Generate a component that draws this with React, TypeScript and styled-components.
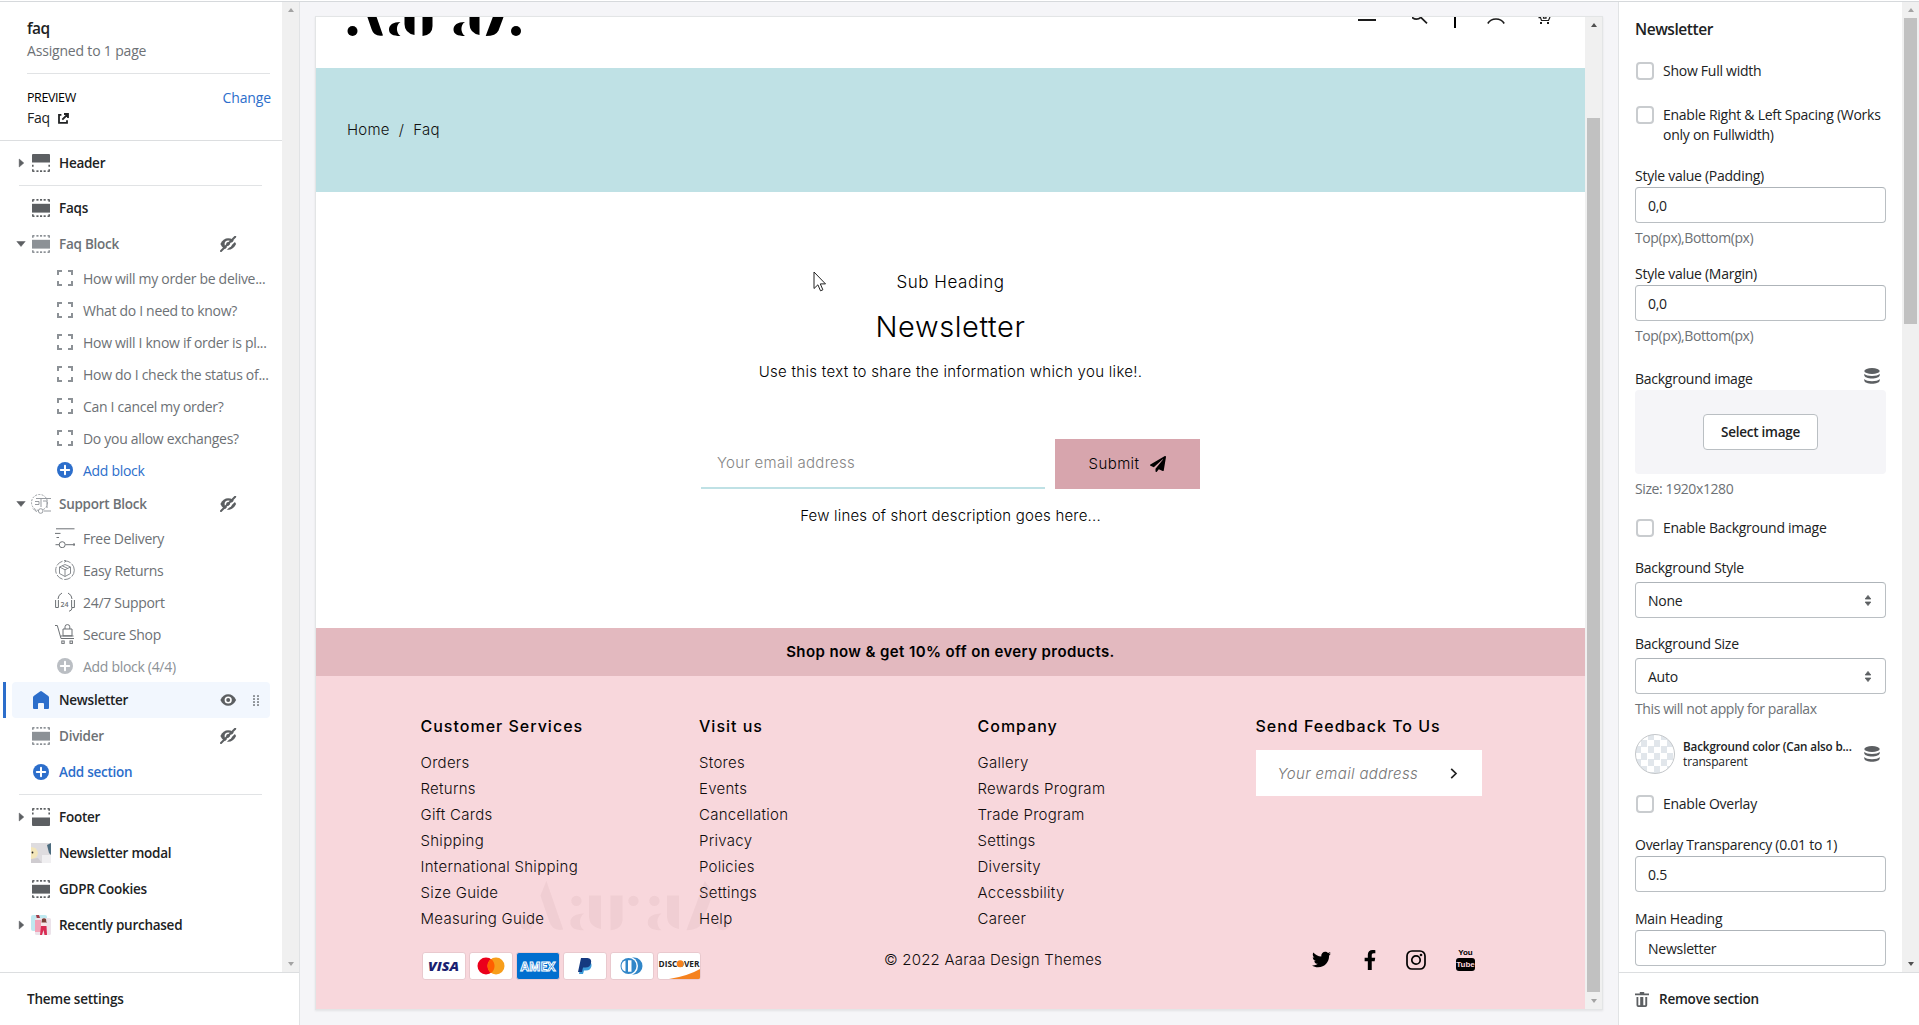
import React from 'react';
import styled, { createGlobalStyle, css } from 'styled-components';
import { FaTwitter, FaFacebookF, FaPaperPlane } from 'react-icons/fa';

const adminFont = '"Open Sans", "Noto Sans", sans-serif';
const storeFont = 'Inter, "Liberation Sans", sans-serif';

const GlobalStyle = createGlobalStyle`
  *, *::before, *::after { box-sizing: border-box; }
  body { margin: 0; background: #f6f6f7; overflow: hidden; font-family: ${adminFont}; color: #202223; }
  svg { display: block; flex: none; }
  ul { list-style: none; margin: 0; padding: 0; }
  h1, h2, h3, p { margin: 0; }
`;

/* ---------- Shell ---------- */

const Editor = styled.div`
  display: flex;
  flex-direction: column;
  width: 1919px;
  height: 1025px;
  overflow: hidden;
`;

const TopEdge = styled.div`
  flex: none;
  height: 2px;
  background: #d6d9dc;
  border-top: 1px solid #fff;
`;

const Columns = styled.div`
  flex: 1;
  min-height: 0;
  display: flex;
`;

const Panel = styled.aside<{ $side: 'left' | 'right' }>`
  flex: none;
  display: flex;
  flex-direction: column;
  width: ${(p) => (p.$side === 'left' ? 300 : 301)}px;
  background: #fff;
  ${(p) => (p.$side === 'left' ? 'border-right' : 'border-left')}: 1px solid #e1e3e5;
  font-size: 14px;
  letter-spacing: -0.26px;
`;

const PanelScroll = styled.div`
  flex: none;
  display: flex;
  height: 970px;
`;

const PanelContent = styled.div`
  flex: 1;
  min-width: 0;
  overflow: hidden;
`;

const PanelFooter = styled.div<{ $pad: number }>`
  flex: 1;
  display: flex;
  align-items: center;
  gap: 10px;
  padding-left: ${(p) => p.$pad}px;
  border-top: 1px solid #dcdee0;
  font-size: 13.5px;
  font-weight: 600;
  letter-spacing: -0.22px;
`;

const Track = styled.div`
  flex: none;
  display: flex;
  flex-direction: column;
  align-items: center;
  justify-content: space-between;
  width: 17px;
  padding: 6px 0;
  background: #f0f0f0;
`;

const Thumb = styled.div<{ $before: number; $height: number }>`
  width: 13px;
  height: ${(p) => p.$height}px;
  margin-top: ${(p) => p.$before}px;
  margin-bottom: auto;
  background: #c1c1c1;
`;

const Arrow = styled.i<{ $down?: boolean; $color?: string }>`
  border: 3.5px solid transparent;
  ${(p) =>
    p.$down
      ? css`border-top: 4px solid ${p.$color || '#a3a3a3'}; border-bottom: 0;`
      : css`border-bottom: 4px solid ${p.$color || '#a3a3a3'}; border-top: 0;`}
`;

/* ---------- Left panel ---------- */

const TemplateHead = styled.header`
  display: flex;
  flex-direction: column;
  height: 72px;
  margin: 0 12px 0 27px;
  padding-top: 16px;
  border-bottom: 1px solid #e1e3e5;
  line-height: 20px;
`;

const TemplateName = styled.h1`
  font-size: 15.5px;
  line-height: 20px;
  font-weight: 600;
  letter-spacing: -0.5px;
`;

const Muted = styled.span`
  color: #6d7175;
  margin-top: 3px;
  letter-spacing: -0.18px;
`;

const PreviewBox = styled.div`
  display: grid;
  grid-template-columns: 1fr auto;
  align-content: start;
  height: 67px;
  padding: 14px 11px 0 27px;
  border-bottom: 1px solid #dcdee0;
  line-height: 20px;
`;

const PreviewLabel = styled.span`
  font-size: 12.5px;
  letter-spacing: -0.4px;
  color: #000;
  font-weight: 500;
`;

const PreviewPage = styled.span`
  display: flex;
  align-items: center;
  gap: 8px;
`;

const TextLink = styled.a`
  color: #2c6ecb;
  letter-spacing: -0.12px;
`;

const Group = styled.ul<{ $top?: number }>`
  margin-left: 12px;
  width: 258px;
  padding-top: ${(p) => p.$top ?? 4}px;
`;

const Rule = styled.hr<{ $top: number }>`
  margin: ${(p) => p.$top}px 20px 0 19px;
  border: 0;
  border-top: 1px solid #e1e3e5;
`;

const Row = styled.li<{ $tone?: 'muted' | 'link'; $selected?: boolean }>`
  position: relative;
  display: flex;
  align-items: center;
  height: 36px;
  padding-left: 3px;
  border-radius: 4px;
  font-size: 13.5px;
  font-weight: 600;
  letter-spacing: -0.26px;
  white-space: nowrap;
  color: ${(p) => (p.$tone === 'muted' ? '#6d7175' : p.$tone === 'link' ? '#2c6ecb' : '#202223')};
  ${(p) =>
    p.$selected &&
    css`
      background: #f2f7fe;
      &::before {
        content: '';
        position: absolute;
        left: -9px;
        top: 0;
        width: 3px;
        height: 36px;
        background: #2c6ecb;
      }
    `}
`;

const CaretSlot = styled.span`
  flex: none;
  display: flex;
  justify-content: center;
  width: 12px;
  margin-right: 4px;
`;

const IconSlot = styled.span`
  flex: none;
  display: flex;
  align-items: center;
  justify-content: center;
  width: 20px;
  height: 20px;
  margin-right: 8px;
`;

const RowLabel = styled.span`
  flex: 1;
`;

const RowTools = styled.span`
  display: flex;
  align-items: center;
  width: 50px;
  gap: 16px;
`;

const BlockRow = styled.li<{ $tone?: 'link' | 'disabled' }>`
  display: flex;
  align-items: center;
  height: 32px;
  padding-left: 43px;
  white-space: nowrap;
  letter-spacing: -0.3px;
  color: ${(p) => (p.$tone === 'link' ? '#2c6ecb' : p.$tone === 'disabled' ? '#8c9196' : '#6d7175')};
`;

/* ---------- Icons ---------- */

const Caret = ({ open }: { open?: boolean }) => (
  <svg width="12" height="12" viewBox="0 0 12 12" fill="#5c5f62">
    {open ? <path d="M1.8 3.5h8.400L6 8.500z" stroke="#5c5f62" strokeWidth=".5" /> : <path d="M4.200 2v8L8.800 6z" stroke="#5c5f62" strokeWidth=".5" />}
  </svg>
);

const dashX = [4.4, 8, 11.6];

const SectionIcon = ({ kind = 'section', muted }: { kind?: 'section' | 'header' | 'footer'; muted?: boolean }) => (
  <svg width="18" height="18" viewBox="0 0 18 18" fill={muted ? '#8c9196' : '#5c5f62'}>
    {kind === 'section' && <rect y="4.8" width="18" height="8.8" />}
    {kind === 'header' && <path d="M1 0h16q1 0 1 1v7.5H0V1q0-1 1-1z" />}
    {kind === 'footer' && <path d="M0 9.5h18V17q0 1-1 1H1q-1 0-1-1z" />}
    {kind !== 'header' && (
      <>
        <path d="M1 0h1.500v1.600H1.600v1.200H0V1q0-1 1-1zM17 0h-1.500v1.600h.9v1.200H18V1q0-1-1-1z" />
        {dashX.map((x) => <rect key={x} x={x} width="2.1" height="1.7" />)}
      </>
    )}
    {kind === 'footer' && <path d="M0 4.600h1.600v2H0zM16.400 4.600H18v2h-1.600z" />}
    {kind === 'header' && <path d="M0 10.800h1.600v2H0zM16.400 10.800H18v2h-1.600z" />}
    {kind !== 'footer' && (
      <>
        <path d="M1 18h1.500v-1.600h-.9v-1.200H0V17q0 1 1 1zM17 18h-1.500v-1.600h.9v-1.200H18V17q0 1-1 1z" />
        {dashX.map((x) => <rect key={x} x={x} y="16.3" width="2.1" height="1.7" />)}
      </>
    )}
  </svg>
);

const BlockIcon = () => (
  <svg width="16" height="16" viewBox="0 0 16 16" fill="none" stroke="#8c9196" strokeWidth="2">
    <path d="M1 5V1h4M11 1h4v4M15 11v4h-4M5 15H1v-4" />
  </svg>
);

const PlusIcon = ({ color = '#2c6ecb' }: { color?: string }) => (
  <svg width="16" height="16" viewBox="0 0 16 16">
    <circle cx="8" cy="8" r="8" fill={color} />
    <path d="M8 3.800v8.400M3.800 8h8.400" stroke="#fff" strokeWidth="2" strokeLinecap="round" />
  </svg>
);

const EyeIcon = ({ off }: { off?: boolean }) => (
  <svg width="17" height="16" viewBox="0 0 17 16">
    <path d="M.4 8C2 4.200 5 2.200 8.200 2.200S14.400 4.200 16.100 8c-1.700 3.800-4.700 5.800-7.900 5.800S2 11.800.4 8z" fill="#5c5f62" />
    <circle cx="8.200" cy="8" r="3.600" fill="#fff" />
    <circle cx="8.200" cy="8" r="2" fill="#5c5f62" />
    {off && (
      <>
        <path d="M2.800 16.500 17.500 2.300" stroke="#fff" strokeWidth="1.800" />
        <path d="M1 15 15.200.8" stroke="#5c5f62" strokeWidth="2" strokeLinecap="round" />
      </>
    )}
  </svg>
);

const DragIcon = () => (
  <svg width="6" height="11" viewBox="0 0 6 11" fill="#8c9196">
    {[0, 3, 6, 9].map((y) => (
      <React.Fragment key={y}>
        <rect y={y} width="2" height="2" rx=".5" />
        <rect x="4" y={y} width="2" height="2" rx=".5" />
      </React.Fragment>
    ))}
  </svg>
);

const HomeIcon = () => (
  <svg width="16" height="18" viewBox="0 0 16 18" fill="#2c6ecb">
    <path d="M7 .4q1-.7 2 0l6.300 4.600q.7.600.7 1.500V17q0 1-1 1h-3.500q-.5 0-.5-.5V13q0-1-1-1H6q-1 0-1 1v4.500q0 .5-.5.5H1q-1 0-1-1V6.500Q0 5.600.7 5z" />
  </svg>
);

const ExternalIcon = () => (
  <svg width="11" height="11" viewBox="0 0 11 11" fill="none" stroke="#202223" strokeWidth="1.800">
    <path d="M3.400 1.800H1v8h8V7.300M6 1h4v4M10 1 4.300 6.700" />
  </svg>
);

const DeliveryIcon = () => (
  <svg width="20" height="20" viewBox="0 0 20 20" fill="none" stroke="#6d7175" strokeWidth="1">
    <path d="M1 .8h18.500M0 5.400h5.500M1.500 9.500h2.500M.5 16.700h4M10.500 16.700H20M19 15v3" />
    <circle cx="7.200" cy="16.700" r="3" />
  </svg>
);

const ReturnsIcon = () => (
  <svg width="20" height="20" viewBox="0 0 20 20" fill="none" stroke="#7b7f83" strokeWidth=".9">
    <circle cx="10" cy="10.200" r="9.300" strokeDasharray="7 1.500" />
    <path d="M10 4.500 15.500 7v6.500L10 16.500 4.500 13.500V7zM4.500 7 10 9.800 15.500 7M10 9.800v6.500M7.200 5.800l5.600 2.600M9 0l2 1-1.500 1.500" />
  </svg>
);

const SupportText = styled.text`
  font: 600 7px ${adminFont};
  letter-spacing: 0;
`;

const SupportIcon = () => (
  <svg width="20" height="20" viewBox="0 0 20 20" fill="none" stroke="#6d7175" strokeWidth="1">
    <path d="M3 7Q3 3 7 1M17 7q0-4-4-6M.6 8v7.500h2.800V8M19.400 8v7.500h-2.800V8M17 16q0 2.500-3 3.300" />
    <SupportText x="5.500" y="14.800" fill="#6d7175" stroke="none">24</SupportText>
  </svg>
);

const ShopIcon = () => (
  <svg width="20" height="20" viewBox="0 0 20 20" fill="none" stroke="#6d7175" strokeWidth="1">
    <path d="M0 1.500h2.300L6 14.500h13M5.500 12h13M8 5h9v6.800H8zM10 5V2.800Q10 .6 12.400.6T14.800 2.800V5" />
    <rect x="6.800" y="17" width="2.400" height="2.400" />
    <rect x="15" y="17" width="2.400" height="2.400" />
  </svg>
);

const SupportBlockIcon = () => (
  <svg width="20" height="20" viewBox="0 0 20 20" fill="none" stroke="#8c9196" strokeWidth=".9">
    <circle cx="8.500" cy="8.500" r="8" strokeDasharray="2 1.300" />
    <path d="M5 4.500h15M4 7.500h4v3H4M10 5v8M12 7h4v7M2 14.500q2 2.500 4 3M13 17h7" />
    <circle cx="9.700" cy="17" r="2.300" fill="#fff" />
  </svg>
);

const ModalThumb = () => (
  <svg width="20" height="20" viewBox="0 0 20 20">
    <rect width="20" height="20" fill="#dedcdf" />
    <path d="M0 4q6 0 7 6-1 6-7 6z" fill="#f3e6ba" />
    <circle cx="1.500" cy="9.500" r=".9" fill="#222" />
    <rect x="11" y="12" width="9" height="8" fill="#f0eff1" />
    <path d="M16 2l4-2v12l-2-2-1-4z" fill="#4b6b7e" />
    <path d="M0 16l7-1 4 5H0z" fill="#cfccd0" />
  </svg>
);

const PurchasedThumb = () => (
  <svg width="20" height="20" viewBox="0 0 20 20">
    <rect width="16" height="16" rx="2" fill="#bfe9f0" />
    <path d="M5 0h3l1 3-3 1z" fill="#a03a46" />
    <rect x="4" y="3" width="16" height="17" rx="1.500" fill="#ece3ea" />
    <path d="M4 5h6v12H4z" fill="#f2a3b8" />
    <path d="M11 4q2-1.500 4 0l.5 4h-5z" fill="#7a4038" />
    <path d="M10 7.500h5l1 4h-6z" fill="#f8e8ea" />
    <path d="M10 11h5.500l.5 9h-2.500l-1-5-1.500 5H9z" fill="#d92c53" />
  </svg>
);

const DatabaseIcon = () => (
  <svg width="16" height="16" viewBox="0 0 16 16" fill="#5c5f62">
    <ellipse cx="8" cy="3" rx="7.700" ry="3" />
    <path d="M.3 5.800C1.500 7.300 4.500 8 8 8s6.500-.7 7.700-2.200v1.500C15.700 9.200 12 10.600 8 10.600S.3 9.200.3 7.300z" />
    <path d="M.3 11c1.200 1.500 4.200 2.200 7.700 2.200s6.500-.7 7.700-2.200v1.500c0 1.900-3.700 3.300-7.700 3.300S.3 14.400.3 12.500z" />
  </svg>
);

const SelectArrows = () => (
  <svg width="8" height="11" viewBox="0 0 8 11" fill="#5c5f62">
    <path d="M4 .4l2.800 3.600H1.200zM4 10.600l2.800-3.600H1.200z" stroke="#5c5f62" strokeWidth=".8" strokeLinejoin="round" />
  </svg>
);

const TrashIcon = () => (
  <svg width="14" height="15" viewBox="0 0 14 15" fill="#5c5f62">
    <path d="M4.800 0h4.400v1.500H14v1.700H0V1.500h4.800z" />
    <path d="M1.500 5h1.800v8.200h1.900V5h1.600v8.200h0V5h1.500v8.200h2V5h1.900v8.200q0 1.800-1.800 1.800H3.300q-1.800 0-1.800-1.800z" />
  </svg>
);

/* Stencil brand mark, shared by the shop header and the footer watermark */
const BrandMark = ({ width, color }: { width: number; color: string }) => (
  <svg width={width} height={(width * 41.500) / 175} viewBox="0 0 175 41.500" fill={color}>
    <circle cx="5.500" cy="36" r="5" />
    <path d="M22 0 36 40.500Q27 42 24.500 34L17 12z" />
    <circle cx="47" cy="16.500" r="4.300" />
    <path d="M53.500 27C46 27 42 30 42 34.500S46 41 53.500 41C49 38 48.500 30 53.500 27z" />
    <path d="M57.500 12h10v28Q57.500 38 57.500 29z" />
    <path d="M75.500 12h10v19Q85.500 40 75.500 41z" />
    <circle cx="94.500" cy="16.500" r="4.300" />
    <circle cx="112" cy="16.500" r="4.300" />
    <path d="M118 27C110.500 27 106.500 30 106.500 34.500s4 6.500 11.500 6.500C113.500 38 113 30 118 27z" />
    <path d="M122.500 12h10v28q-10-2-10-11z" />
    <path d="M154 0 161 10 151.500 35.500Q149 41 138.700 41z" />
    <circle cx="169" cy="36" r="5" />
  </svg>
);

/* ---------- Storefront preview ---------- */

const Stage = styled.main`
  flex: none;
  width: 1318px;
  padding: 14px 15px;
  background: #f5f5f8;
`;

const Frame = styled.div`
  position: relative;
  display: flex;
  height: 994px;
  width: 1288px;
  background: #fff;
  border: 1px solid #e3e5e6;
  box-shadow: 0 1px 2px rgba(0, 0, 0, 0.08);
`;

const Shop = styled.div`
  flex: 1;
  display: flex;
  flex-direction: column;
  font-family: ${storeFont};
  font-weight: 350;
  color: #000;
  white-space: nowrap;
`;

const ShopHeader = styled.header`
  flex: none;
  display: flex;
  justify-content: space-between;
  align-items: flex-start;
  height: 51px;
  padding: 0 34px 0 31px;
  overflow: hidden;
`;

const HeaderLogo = styled.div`
  margin-top: -22px;
`;

const HeaderNav = styled.nav`
  display: flex;
  align-items: flex-start;
`;

const NavIcon = styled.svg<{ $gap?: number }>`
  margin-left: ${(p) => p.$gap || 0}px;
`;

const Breadcrumb = styled.div`
  flex: none;
  display: flex;
  align-items: center;
  gap: 9px;
  height: 124px;
  padding: 0 31px 1px;
  background: #bfe1e5;
  font-size: 15px;
  color: #111;
  letter-spacing: 0.25px;
`;

const Signup = styled.section`
  flex: none;
  display: flex;
  flex-direction: column;
  align-items: center;
  height: 436px;
  padding-top: 78px;
`;

const SubHeading = styled.p`
  font-size: 17px;
  line-height: 24px;
  letter-spacing: 0.55px;
`;

const SignupTitle = styled.h2`
  margin-top: 15px;
  font-size: 29px;
  line-height: 36px;
  font-weight: 350;
  letter-spacing: 0.6px;
`;

const SignupText = styled.p<{ $top: number; $spacing: number }>`
  margin-top: ${(p) => p.$top}px;
  font-size: 15px;
  line-height: 20px;
  letter-spacing: ${(p) => p.$spacing}px;
`;

const SignupForm = styled.form`
  display: flex;
  gap: 10px;
  width: 499px;
  height: 50px;
  margin-top: 57px;
`;

const Placeholder = styled.div`
  flex: 1;
  padding: 14px 16px;
  border-bottom: 2px solid #bfe1e5;
  font-size: 15px;
  line-height: 20px;
  color: #858585;
  letter-spacing: 0.28px;
`;

const Submit = styled.div`
  display: flex;
  align-items: center;
  justify-content: center;
  gap: 11px;
  width: 145px;
  padding-bottom: 1px;
  background: #d7a5ad;
  font-size: 15px;
  letter-spacing: 0.4px;
`;

const Announcement = styled.div`
  flex: none;
  height: 48px;
  background: #e3b9bf;
  font-size: 15px;
  line-height: 48px;
  font-weight: 600;
  letter-spacing: 0.4px;
  text-align: center;
`;

const ShopFooter = styled.footer`
  position: relative;
  flex: 1;
  padding: 40px 103px 0 104.500px;
  background: #f8d7dc;
  color: #111;
`;

const FooterGrid = styled.div`
  display: grid;
  grid-template-columns: 278.500px 278.500px 278px 1fr;
  height: 223px;
`;

const FooterTitle = styled.h3`
  margin-bottom: 14px;
  font-size: 16px;
  line-height: 20px;
  font-weight: 550;
  letter-spacing: 1px;
  color: #000;
`;

const FooterLink = styled.li`
  font-size: 15px;
  line-height: 26px;
  letter-spacing: 0.28px;
  color: #100c0d;
`;

const Feedback = styled.div`
  display: flex;
  align-items: center;
  justify-content: space-between;
  width: 226px;
  height: 46px;
  padding: 0 24px 0 22px;
  background: #fff;
  font-size: 15px;
  font-style: italic;
  font-weight: 300;
  letter-spacing: 0.35px;
  color: #777;
`;

const FooterBottom = styled.div`
  display: grid;
  grid-template-columns: 463.500px auto 1fr;
  align-items: center;
  height: 40px;
`;

const Payments = styled.div`
  display: flex;
  gap: 3px;
  padding: 13px 0 0 1px;
`;

const PayText = styled.text<{ $size: number }>`
  font: italic 800 ${(p) => p.$size}px ${adminFont};
  letter-spacing: 0;
`;

const Upright = styled(PayText)`
  font-style: normal;
  font-weight: 700;
`;

const Copyright = styled.div`
  font-size: 15px;
  letter-spacing: 0.2px;
  color: #100c0d;
`;

const Socials = styled.div`
  display: flex;
  justify-content: flex-end;
  align-items: center;
  padding-right: 7px;
  color: #000;
`;

const SocialSlot = styled.span<{ $gap?: number }>`
  display: flex;
  margin-left: ${(p) => p.$gap || 0}px;
`;

const YouTube = styled.span`
  display: flex;
  flex-direction: column;
  align-items: center;
  width: 19px;
  font: 700 8px/10px "Liberation Sans", sans-serif;
`;

const YouTubeBox = styled.span`
  width: 19px;
  height: 13px;
  border-radius: 3px;
  background: #000;
  color: #f8d7dc;
  line-height: 13px;
  text-align: center;
`;

const Watermark = styled.div`
  position: absolute;
  left: 204px;
  top: 205px;
  pointer-events: none;
`;

const Cursor = styled.div`
  position: absolute;
  left: 497px;
  top: 254px;
`;

const PayCard = ({ children, fill = '#fff' }: { children: React.ReactNode; fill?: string }) => (
  <svg width="44" height="28" viewBox="0 0 44 28">
    <rect x=".5" y=".5" width="43" height="27" rx="2.500" fill={fill} stroke="#e9c9ce" />
    {children}
  </svg>
);

const footerColumns = [
  ['Customer Services', 'Orders', 'Returns', 'Gift Cards', 'Shipping', 'International Shipping', 'Size Guide', 'Measuring Guide'],
  ['Visit us', 'Stores', 'Events', 'Cancellation', 'Privacy', 'Policies', 'Settings', 'Help'],
  ['Company', 'Gallery', 'Rewards Program', 'Trade Program', 'Settings', 'Diversity', 'Accessbility', 'Career'],
];

const Preview = () => (
  <Stage>
    <Frame>
      <Shop>
        <ShopHeader>
          <HeaderLogo>
            <BrandMark width={175} color="#000" />
          </HeaderLogo>
          <HeaderNav>
            <NavIcon width="18" height="8"><path d="M0 3h18" stroke="#1c1c1c" strokeWidth="2" /></NavIcon>
            <NavIcon $gap={36} width="16" height="8" fill="none" stroke="#1c1c1c" strokeWidth="1.700">
              <path d="M0 .3Q4.500 4 9 .3M8.800.3l6.200 6" />
            </NavIcon>
            <NavIcon $gap={26} width="2" height="12"><path d="M1 0v11" stroke="#000" strokeWidth="2" /></NavIcon>
            <NavIcon $gap={31} width="18" height="8" fill="none" stroke="#1c1c1c" strokeWidth="1.600">
              <path d="M.8 6.500Q3.500 2 9 2t8.200 4.500" />
            </NavIcon>
            <NavIcon $gap={33} width="13" height="8" fill="none" stroke="#1c1c1c" strokeWidth="1.200">
              <path d="M.5.600h2L3.500 3.500h7L12 0M5.500 0v1.200h2.500V0" />
              <path d="M2 6h2M9 6h2" strokeWidth="1.900" />
            </NavIcon>
          </HeaderNav>
        </ShopHeader>
        <Breadcrumb>
          <span>Home</span>
          <span>/</span>
          <span>Faq</span>
        </Breadcrumb>
        <Signup>
          <SubHeading>Sub Heading</SubHeading>
          <SignupTitle>Newsletter</SignupTitle>
          <SignupText $top={17} $spacing={0.3}>Use this text to share the information which you like!.</SignupText>
          <SignupForm>
            <Placeholder>Your email address</Placeholder>
            <Submit>
              Submit
              <FaPaperPlane size={16} />
            </Submit>
          </SignupForm>
          <SignupText $top={17} $spacing={0.2}>Few lines of short description goes here...</SignupText>
        </Signup>
        <Announcement>Shop now &amp; get 10% off on every products.</Announcement>
        <ShopFooter>
          <Watermark>
            <BrandMark width={210} color="rgba(120, 60, 70, 0.06)" />
          </Watermark>
          <FooterGrid>
            {footerColumns.map(([title, ...links]) => (
              <div key={title}>
                <FooterTitle>{title}</FooterTitle>
                <ul>
                  {links.map((link) => (
                    <FooterLink key={link}>{link}</FooterLink>
                  ))}
                </ul>
              </div>
            ))}
            <div>
              <FooterTitle>Send Feedback To Us</FooterTitle>
              <Feedback>
                Your email address
                <svg width="8" height="11" viewBox="0 0 8 11" fill="none" stroke="#222" strokeWidth="1.700">
                  <path d="M1.200.8 6 5.500 1.200 10.200" />
                </svg>
              </Feedback>
            </div>
          </FooterGrid>
          <FooterBottom>
            <Payments>
              <PayCard>
                <PayText $size={13} x="6" y="18.800" fill="#1a1f71" textLength="31" lengthAdjust="spacingAndGlyphs">VISA</PayText>
              </PayCard>
              <PayCard>
                <circle cx="17" cy="14" r="8.500" fill="#eb001b" />
                <circle cx="27" cy="14" r="8.500" fill="#f79e1b" />
                <path d="M22 7.100a8.500 8.500 0 0 1 0 13.800 8.500 8.500 0 0 1 0-13.800z" fill="#ff5f00" />
              </PayCard>
              <PayCard fill="#006fcf">
                <Upright $size={12.5} x="4.500" y="18.600" fill="#006fcf" stroke="#fff" strokeWidth="1" textLength="35" lengthAdjust="spacingAndGlyphs">AMEX</Upright>
              </PayCard>
              <PayCard>
                <path d="M18.500 9h6q4.500.5 4 5-1 4.500-5.500 4.500h-2L20 22h-4z" fill="#3b9bd9" />
                <path d="M18 6h6.500q4.500.5 3.500 5-1 4.500-5.500 4.500H20L19 20h-4z" fill="#153a80" />
              </PayCard>
              <PayCard>
                <path d="M22 5.500h2a8.500 8.500 0 0 1 0 17h-2z" fill="#3086c8" />
                <circle cx="18.500" cy="14" r="9.500" fill="#fff" />
                <circle cx="18.500" cy="14" r="8" fill="#3086c8" />
                <path d="M15.500 8.500v11a5.800 5.800 0 0 1 0-11zM18 8.300h3.500v11.400H18z" fill="#fff" />
              </PayCard>
              <PayCard>
                <path d="M43 17v8.500q0 1.500-1.500 1.500H12Q31 24 43 17z" fill="#f5821f" />
                <Upright $size={8.5} x="1.500" y="14.500" fill="#222" textLength="41" lengthAdjust="spacingAndGlyphs">DISCOVER</Upright>
                <circle cx="23.200" cy="11.700" r="3.500" fill="#f5821f" />
              </PayCard>
            </Payments>
            <Copyright>© 2022 Aaraa Design Themes</Copyright>
            <Socials>
              <SocialSlot><FaTwitter size={19} /></SocialSlot>
              <SocialSlot $gap={29}><FaFacebookF size={20} /></SocialSlot>
              <SocialSlot $gap={26}>
                <svg width="20" height="20" viewBox="0 0 20 20" fill="none" stroke="#000" strokeWidth="1.700">
                  <rect x="1" y="1" width="18" height="18" rx="5" />
                  <circle cx="10" cy="10" r="4.200" />
                  <circle cx="15" cy="5" r=".5" />
                </svg>
              </SocialSlot>
              <SocialSlot $gap={30}>
                <YouTube>
                  You
                  <YouTubeBox>Tube</YouTubeBox>
                </YouTube>
              </SocialSlot>
            </Socials>
          </FooterBottom>
        </ShopFooter>
      </Shop>
      <Track>
        <Arrow $color="#505050" />
        <Thumb $before={91} $height={874} />
        <Arrow $down />
      </Track>
      <Cursor>
        <svg width="14" height="21" viewBox="0 0 14 21">
          <path d="M1 1v16.500l3.900-3.700 2.600 6 2.400-1-2.600-5.900h5.200z" fill="#fff" stroke="#222" strokeWidth="1" />
        </svg>
      </Cursor>
    </Frame>
  </Stage>
);

/* ---------- Section tree ---------- */

const faqItems = [
  'How will my order be delive...',
  'What do I need to know?',
  'How will I know if order is pl...',
  'How do I check the status of...',
  'Can I cancel my order?',
  'Do you allow exchanges?',
];

const supportItems: [string, React.ReactNode][] = [
  ['Free Delivery', <DeliveryIcon />],
  ['Easy Returns', <ReturnsIcon />],
  ['24/7 Support', <SupportIcon />],
  ['Secure Shop', <ShopIcon />],
];

type SectionRowProps = {
  label: string;
  icon: React.ReactNode;
  caret?: 'open' | 'closed';
  tone?: 'muted' | 'link';
  eye?: 'on' | 'off';
  selected?: boolean;
};

const SectionRow = ({ label, icon, caret, tone, eye, selected }: SectionRowProps) => (
  <Row $tone={tone} $selected={selected}>
    <CaretSlot>{caret && <Caret open={caret === 'open'} />}</CaretSlot>
    <IconSlot>{icon}</IconSlot>
    <RowLabel>{label}</RowLabel>
    {eye && (
      <RowTools>
        <EyeIcon off={eye === 'off'} />
        {selected && <DragIcon />}
      </RowTools>
    )}
  </Row>
);

const SectionTree = () => (
  <Panel $side="left">
    <PanelScroll>
      <PanelContent>
        <TemplateHead>
          <TemplateName>faq</TemplateName>
          <Muted>Assigned to 1 page</Muted>
        </TemplateHead>
        <PreviewBox>
          <PreviewLabel>PREVIEW</PreviewLabel>
          <TextLink>Change</TextLink>
          <PreviewPage>
            <span>Faq</span>
            <ExternalIcon />
          </PreviewPage>
        </PreviewBox>
        <Group>
          <SectionRow label="Header" caret="closed" icon={<SectionIcon kind="header" />} />
        </Group>
        <Rule $top={4} />
        <Group>
          <SectionRow label="Faqs" icon={<SectionIcon />} />
          <SectionRow label="Faq Block" caret="open" tone="muted" eye="off" icon={<SectionIcon muted />} />
          {faqItems.map((item) => (
            <BlockRow key={item}>
              <IconSlot><BlockIcon /></IconSlot>
              {item}
            </BlockRow>
          ))}
          <BlockRow $tone="link">
            <IconSlot><PlusIcon /></IconSlot>
            Add block
          </BlockRow>
          <SectionRow label="Support Block" caret="open" tone="muted" eye="off" icon={<SupportBlockIcon />} />
          {supportItems.map(([item, icon]) => (
            <BlockRow key={item}>
              <IconSlot>{icon}</IconSlot>
              {item}
            </BlockRow>
          ))}
          <BlockRow $tone="disabled">
            <IconSlot><PlusIcon color="#babec3" /></IconSlot>
            Add block (4/4)
          </BlockRow>
          <SectionRow label="Newsletter" selected eye="on" icon={<HomeIcon />} />
          <SectionRow label="Divider" tone="muted" eye="off" icon={<SectionIcon muted />} />
          <SectionRow label="Add section" tone="link" icon={<PlusIcon />} />
        </Group>
        <Rule $top={4} />
        <Group>
          <SectionRow label="Footer" caret="closed" icon={<SectionIcon kind="footer" />} />
          <SectionRow label="Newsletter modal" icon={<ModalThumb />} />
          <SectionRow label="GDPR Cookies" icon={<SectionIcon />} />
          <SectionRow label="Recently purchased" caret="closed" icon={<PurchasedThumb />} />
        </Group>
      </PanelContent>
      <Track>
        <Arrow />
        <Arrow $down />
      </Track>
    </PanelScroll>
    <PanelFooter $pad={27}>Theme settings</PanelFooter>
  </Panel>
);

/* ---------- Section settings ---------- */

const SettingsTitle = styled.h2`
  height: 60px;
  padding-top: 16px;
  font-size: 15.500px;
  line-height: 22px;
  font-weight: 600;
  letter-spacing: -0.45px;
`;

const Settings = styled(PanelContent)`
  padding: 0 16px;
`;

const CheckRow = styled.label<{ $after: number }>`
  display: flex;
  align-items: flex-start;
  gap: 9px;
  margin: 0 0 ${(p) => p.$after}px 1px;
  line-height: 20px;
`;

const CheckBox = styled.span`
  flex: none;
  width: 18px;
  height: 18px;
  border: 2px solid #c9cccf;
  border-radius: 4px;
`;

const CheckLabel = styled.span`
  margin-top: -1px;
  white-space: pre-line;
`;

const Field = styled.div<{ $after: number }>`
  margin-bottom: ${(p) => p.$after}px;
`;

const FieldLabel = styled.div<{ $height?: number }>`
  display: flex;
  justify-content: space-between;
  height: ${(p) => p.$height || 21}px;
  padding-right: 6px;
  line-height: 20px;
`;

const LabelIcon = styled.span`
  margin-top: -1px;
`;

const Box = styled.div`
  display: flex;
  align-items: center;
  justify-content: space-between;
  width: 251px;
  height: 36px;
  padding: 0 13px 0 12px;
  border: 1px solid #babfc3;
  border-top-color: #aeb4b9;
  border-radius: 4px;
`;

const Help = styled.div`
  margin-top: 5px;
  line-height: 20px;
  color: #6d7175;
  letter-spacing: -0.4px;
`;

const ImagePicker = styled.div`
  display: flex;
  align-items: center;
  justify-content: center;
  width: 251px;
  height: 84px;
  border-radius: 4px;
  background: #f5f5f8;
`;

const PickerButton = styled.div`
  width: 115px;
  height: 36px;
  border: 1px solid #babfc3;
  border-radius: 4px;
  background: #fff;
  font-size: 13.500px;
  line-height: 34px;
  font-weight: 600;
  text-align: center;
`;

const ColorRow = styled.div`
  display: flex;
  align-items: center;
  height: 40px;
  margin-bottom: 21px;
`;

const Swatch = styled.span`
  flex: none;
  width: 40px;
  height: 40px;
  margin-right: 8px;
  border: 1px solid #c4c7ca;
  border-radius: 50%;
  background: repeating-conic-gradient(#fff 0 25%, #e1e6eb 0 50%) 5px 5px / 13px 13px;
`;

const ColorText = styled.span`
  flex: none;
  width: 181px;
  padding-bottom: 1px;
  font-size: 12px;
  line-height: 16px;
  letter-spacing: -0.15px;
  white-space: nowrap;
`;

const ColorName = styled.div`
  font-size: 11.700px;
  font-weight: 600;
`;

const Checkbox = ({ label, after }: { label: string; after: number }) => (
  <CheckRow $after={after}>
    <CheckBox />
    <CheckLabel>{label}</CheckLabel>
  </CheckRow>
);

const SectionSettings = () => (
  <Panel $side="right">
    <PanelScroll>
      <Settings>
        <SettingsTitle>Newsletter</SettingsTitle>
        <Checkbox label="Show Full width" after={25} />
        <Checkbox label={'Enable Right & Left Spacing (Works\nonly on Fullwidth)'} after={21} />
        <Field $after={16}>
          <FieldLabel>Style value (Padding)</FieldLabel>
          <Box>0,0</Box>
          <Help>Top(px),Bottom(px)</Help>
        </Field>
        <Field $after={23}>
          <FieldLabel>Style value (Margin)</FieldLabel>
          <Box>0,0</Box>
          <Help>Top(px),Bottom(px)</Help>
        </Field>
        <Field $after={20}>
          <FieldLabel>
            Background image
            <LabelIcon><DatabaseIcon /></LabelIcon>
          </FieldLabel>
          <ImagePicker>
            <PickerButton>Select image</PickerButton>
          </ImagePicker>
          <Help>Size: 1920x1280</Help>
        </Field>
        <Checkbox label="Enable Background image" after={20} />
        <Field $after={16}>
          <FieldLabel $height={24}>Background Style</FieldLabel>
          <Box>None<SelectArrows /></Box>
        </Field>
        <Field $after={15}>
          <FieldLabel $height={24}>Background Size</FieldLabel>
          <Box>Auto<SelectArrows /></Box>
          <Help>This will not apply for parallax</Help>
        </Field>
        <ColorRow>
          <Swatch />
          <ColorText>
            <ColorName>Background color (Can also b...</ColorName>
            transparent
          </ColorText>
          <DatabaseIcon />
        </ColorRow>
        <Checkbox label="Enable Overlay" after={21} />
        <Field $after={17}>
          <FieldLabel>Overlay Transparency (0.01 to 1)</FieldLabel>
          <Box>0.5</Box>
        </Field>
        <Field $after={0}>
          <FieldLabel>Main Heading</FieldLabel>
          <Box>Newsletter</Box>
        </Field>
      </Settings>
      <Track>
        <Arrow />
        <Thumb $before={6} $height={306} />
        <Arrow $down $color="#505050" />
      </Track>
    </PanelScroll>
    <PanelFooter $pad={16}>
      <TrashIcon />
      Remove section
    </PanelFooter>
  </Panel>
);

export default function App() {
  return (
    <Editor>
      <GlobalStyle />
      <TopEdge />
      <Columns>
        <SectionTree />
        <Preview />
        <SectionSettings />
      </Columns>
    </Editor>
  );
}
